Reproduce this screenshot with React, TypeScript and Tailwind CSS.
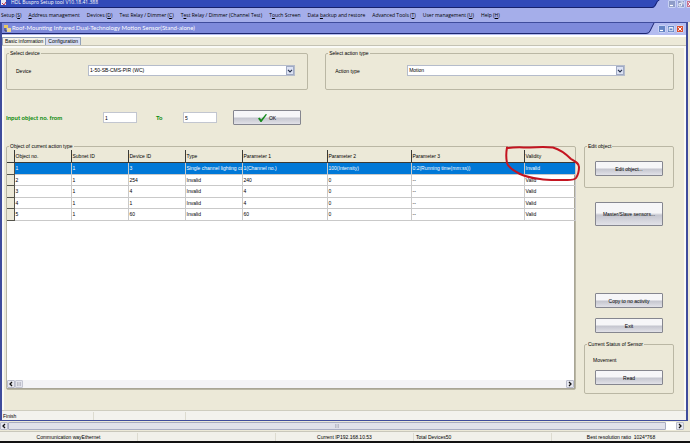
import type { ReactNode } from "react";

const MENU: ReactNode[] = [
  <>Setup (<u>S</u>)</>,
  <><u>A</u>ddress management</>,
  <>Devices (<u>D</u>)</>,
  <>Test Relay / Dimmer (<u>C</u>)</>,
  <>T<u>e</u>st Relay / Dimmer (Channel Test)</>,
  <>T<u>o</u>uch Screen</>,
  <>Data <u>b</u>ackup and restore</>,
  <>Advanced Tools (<u>T</u>)</>,
  <>User management (<u>U</u>)</>,
  <>Help (<u>H</u>)</>,
];

const COLUMNS = [
  { label: "Object no.", width: "w-[57px]" },
  { label: "Subnet ID", width: "w-[57px]" },
  { label: "Device ID", width: "w-[57px]" },
  { label: "Type", width: "w-[57px]" },
  { label: "Parameter 1", width: "w-[85px]" },
  { label: "Parameter 2", width: "w-[84px]" },
  { label: "Parameter 3", width: "w-[113px]" },
  { label: "Validity", width: "w-[51px]" },
];

const ROWS = [
  ["1", "1", "3", "Single channel lighting co", "1(Channel no.)", "100(Intensity)", "0:2(Running time(mm:ss))", "Invalid"],
  ["2", "1", "254", "Invalid", "240", "0", "--", "Valid"],
  ["3", "1", "4", "Invalid", "4", "0", "--", "Valid"],
  ["4", "1", "1", "Invalid", "4", "0", "--", "Valid"],
  ["5", "1", "60", "Invalid", "60", "0", "--", "Valid"],
];

function WindowButtons({ muted = false }: { muted?: boolean }) {
  const blue = muted ? "bg-[#8e9cc8]" : "bg-[#6484c4]";
  const red = muted ? "bg-[#c8708c]" : "bg-[#dc5030]";
  const base = "flex h-2 w-2 items-center justify-center rounded-[1px] border border-[#c8d2f4]";
  return (
    <div className="flex gap-px">
      <button aria-label="Minimize" className={`${base} ${blue}`}>
        <svg viewBox="0 0 6 6" className="h-1.5 w-1.5"><path d="M1 4.5h3" stroke="#fff" strokeWidth="1.2" /></svg>
      </button>
      <button aria-label="Restore" className={`${base} ${blue}`}>
        <svg viewBox="0 0 6 6" className="h-1.5 w-1.5" fill="none" stroke="#fff">
          {muted ? <path d="M2.5 1h2.5v2.5M1 2.5h2.5V5H1z" strokeWidth=".8" /> : <path d="M1.2 1.5h3.6v3.2H1.2zM1.2 2h3.6" strokeWidth=".8" />}
        </svg>
      </button>
      <button aria-label="Close" className={`${base} ${red}`}>
        <svg viewBox="0 0 6 6" className="h-1.5 w-1.5"><path d="M1.2 1.2l3.6 3.6M4.8 1.2L1.2 4.8" stroke="#fff" strokeWidth="1" /></svg>
      </button>
    </div>
  );
}

function Group({ title, className = "", children }: { title: string; className?: string; children: ReactNode }) {
  return (
    <fieldset className={`min-w-0 rounded-[2px] border border-[#bab7a4] ${className}`}>
      <legend className="ml-0.5 px-px leading-[7px]">{title}</legend>
      {children}
    </fieldset>
  );
}

function Combo({ id, label, value, className }: { id: string; label: string; value: string; className: string }) {
  return (
    <div className={`flex items-center pt-2 pb-[13px] pl-px ${className}`}>
      <label htmlFor={id} className="w-20 shrink-0 pl-2">{label}</label>
      <div className="relative flex-1">
        <select id={id} className="block h-[11px] w-full appearance-none border border-[#b5bccb] bg-white px-px leading-[9px]">
          <option>{value}</option>
        </select>
        <span className="pointer-events-none absolute top-px right-px flex h-[9px] w-2 items-center justify-center border border-[#a0aac4] bg-[#dde3f4]">
          <svg viewBox="0 0 6 4" className="h-1 w-1.5" fill="none" stroke="#28324c" strokeWidth="1.2"><path d="M1 .8l2 2 2-2" /></svg>
        </span>
      </div>
    </div>
  );
}

function PushButton({ className = "h-[15px]", children }: { className?: string; children: ReactNode }) {
  return (
    <button className={`flex w-[68px] items-center justify-center gap-0.5 rounded-[1px] border border-[#85868f] bg-linear-to-b from-[#f6f6f8] from-45% via-[#c5c6cf] via-55% to-[#e2e2e8] ${className}`}>
      {children}
    </button>
  );
}

function ScrollArrow({ dir }: { dir: "left" | "right" }) {
  return (
    <button aria-label={`Scroll ${dir}`} className="flex h-2 w-2 shrink-0 items-center justify-center rounded-[1px] border border-[#b9bccb] bg-[#e6e7ef]">
      <svg viewBox="0 0 4 6" className="h-1.5 w-1" fill="none" stroke="#111" strokeWidth="1.3">
        <path d={dir === "left" ? "M3 1L1 3l2 2" : "M1 1l2 2-2 2"} />
      </svg>
    </button>
  );
}

function Grip() {
  return <svg viewBox="0 0 4 4" className="h-1 w-1" stroke="#a4a6b4" strokeWidth=".6"><path d="M.5 0v4M2 0v4M3.5 0v4" /></svg>;
}

function ObjectTable() {
  return (
    <div className="relative flex flex-1 flex-col border-r border-b border-[#a9a696] bg-white">
      <table className="w-full table-fixed border-collapse">
        <thead>
          <tr className="h-3 bg-[#ece9d8]">
            <th className="w-[7px] border-r border-b border-[#3a3a36]" />
            {COLUMNS.map(c => (
              <th key={c.label} className={`${c.width} overflow-hidden border-r border-b border-[#3a3a36] p-0 pl-px text-left font-normal last:border-r-0`}>{c.label}</th>
            ))}
          </tr>
        </thead>
        <tbody>
          {ROWS.map((row, i) => (
            <tr key={row[0]} className={i === 0 ? "h-3 bg-[#0078d7] text-white" : "h-3 even:h-[11px]"}>
              <td className="border-r border-b border-[#55544c] bg-[#ece9d8] p-0" />
              {row.map((cell, j) => (
                <td key={j} className="overflow-hidden border-r border-b border-[#c9c9c9] p-0 pl-px whitespace-nowrap">{cell}</td>
              ))}
            </tr>
          ))}
        </tbody>
      </table>
      <div className="mt-auto flex items-center bg-[#f4f4f6]">
        <ScrollArrow dir="left" />
        <span className="flex h-2 w-2 items-center justify-center rounded-[1px] border border-[#c4c6d2] bg-[#e3e4ec]"><Grip /></span>
        <span className="flex-1" />
        <ScrollArrow dir="right" />
      </div>
      {/* pen mark round the validity cell */}
      <svg viewBox="0 0 80 38" className="pointer-events-none absolute -top-1 -right-2 h-[38px] w-20" fill="none" stroke="#c41420" strokeWidth="2" strokeLinecap="round">
        <path d="M6 2C14 .8 20 1.500 28 1.500C36 1 44 .8 51 1.500C58 3.500 64 8 69 13C74 16 77 17.500 77 21C77 25 76 29 74 32C72 34.500 68 34 62 34C54 34 46 34.500 38 33C30 32 24 31 18 28C12 25 6 21 5 17C4 12 4 7 5 1.500" />
      </svg>
    </div>
  );
}

export default function App() {
  return (
    <div className="flex min-h-screen flex-col bg-[#ece9d8] font-['Liberation_Sans',sans-serif] text-[5px] leading-[8px] text-black">
      <header className="font-['Open_Sans',sans-serif]">
        <div className="flex h-2 overflow-hidden bg-[#a5aeea]">
          <div className="flex flex-1 items-start gap-1 border-b border-[#16206c] bg-[#3149b8] pl-px text-white">
            <svg viewBox="0 0 6 6" className="h-1.5 w-1.5"><path d="M0 0h5v5H0z" fill="#e8e8f4" /><path d="M1 3l2 2 2-3" stroke="#c03048" fill="none" /></svg>
            <span className="leading-[5px]">HDL Buspro Setup tool V10.18.41.388</span>
          </div>
          <svg viewBox="0 0 10 8" className="h-2 w-2.5"><path d="M0 0h10C6 1 7 8 2 8H0z" fill="#3149b8" /><path d="M0 7.500h2C6 7 6 1 9 0" stroke="#16206c" fill="none" /></svg>
          <div className="w-[30px] pl-2"><WindowButtons muted /></div>
        </div>
        <nav className="flex h-3.5 items-center gap-[7px] bg-[#a5aeea] pl-px whitespace-nowrap">
          {MENU.map((item, i) => <button key={i}>{item}</button>)}
        </nav>
      </header>

      <main className="mr-0.5 flex flex-1 flex-col border-x-2 border-t border-b border-[#3f4c9c] bg-[#ece9d8]">
        <div className="flex h-[11px] bg-[#b4bcf0]">
          <div className="flex flex-1 items-center gap-px border-b border-[#1c2670] bg-[#7e8adb] pl-0.5 text-white">
            <svg viewBox="0 0 7 7" className="h-[7px] w-[7px]"><path d="M0 0h4v3H0z" fill="#e8c860" /><path d="M3 3h4v4H3z" fill="#f0d890" /><path d="M1 3v3h2" stroke="#333" fill="none" strokeWidth=".8" /></svg>
            <span className="font-['Lato',sans-serif] text-[6px]">Roof-Mounting Infrared Dual-Technology Motion Sensor(Stand-alone)</span>
          </div>
          <svg viewBox="0 0 10 11" className="h-[11px] w-2.5"><path d="M0 0h8L4 9Q3 11 0 11z" fill="#7e8adb" /><path d="M0 10.500Q3 10.500 4 8L8 0" stroke="#1c2670" fill="none" /></svg>
          <div className="flex w-[30px] items-center pl-0.5"><WindowButtons /></div>
        </div>
        <div className="h-[3px] border-t border-[#b4bcf0] bg-white" />
        <div role="tablist" className="flex h-[9px] border-b border-[#c4c2b4] leading-[7px]">
          <button role="tab" className="border border-b-0 border-[#91a0b8] bg-[#f4f2e8] px-0.5">Basic information</button>
          <button role="tab" className="border border-b-0 border-l-0 border-[#91a0b8] bg-[#d8def4] px-0.5">Configuration</button>
        </div>

        <div className="flex flex-1 flex-col border-2 border-b-0 border-[#fafaf6] pt-0.5 pr-2.5 pb-4 pl-0.5">
          <div className="flex gap-[17px]">
            <Group title="Select device" className="flex-[302]">
              <Combo id="device" label="Device" value="1-50-SB-CMS-PIR (WC)" className="pr-3" />
            </Group>
            <Group title="Select action type" className="flex-[349]">
              <Combo id="action" label="Action type" value="Motion" className="pr-12" />
            </Group>
          </div>

          <div className="flex items-center pt-5 pb-[18px]">
            <label htmlFor="from" className="w-[97px] font-['Lato',sans-serif] text-[6px] font-bold text-[#0a8a0a]">Input object no. from</label>
            <input id="from" defaultValue="1" className="h-[11px] w-[34px] border border-[#c2c6d0] bg-white px-px" />
            <label htmlFor="to" className="w-[46px] pl-[19px] font-['Lato',sans-serif] text-[6px] font-bold text-[#0a8a0a]">To</label>
            <input id="to" defaultValue="5" className="mr-4 h-[11px] w-[34px] border border-[#c2c6d0] bg-white px-px" />
            <PushButton>
              <svg viewBox="0 0 9 8" className="h-2 w-[9px]"><path d="M0 4.500L1.500 3.500 3.200 5.500 7.800 0 9 .5 3.500 8H2.500z" fill="#168a1c" /></svg>
              OK
            </PushButton>
          </div>

          <div className="flex flex-1 gap-2">
            <Group title="Object of current action type" className="mb-1 flex flex-1 flex-col">
              <ObjectTable />
            </Group>
            <aside className="flex w-[90px] flex-col items-center">
              <Group title="Edit object" className="flex w-full flex-col items-center py-[11px]">
                <PushButton>Edit object...</PushButton>
              </Group>
              <div className="mt-3.5"><PushButton className="h-6">Master/Slave sensors...</PushButton></div>
              <div className="mt-auto mb-2 flex flex-col gap-2.5">
                <PushButton>Copy to no activity</PushButton>
                <PushButton>Exit</PushButton>
              </div>
              <Group title="Current Status of Sensor" className="w-full pb-2">
                <p className="pt-2 pb-1.5 pl-2">Movement</p>
                <div className="flex justify-center"><PushButton>Read</PushButton></div>
              </Group>
            </aside>
          </div>
        </div>

        <div className="flex h-2.5 items-center border-t border-[#cfcdc0] bg-[#f3f2ee]">
          <span className="w-[92px] border-r border-[#dddbd0] pl-px">Finish</span>
          <span className="h-2 w-[92px] border-r border-[#dddbd0]" />
        </div>
      </main>

      <div className="flex h-[9px] items-center pr-1.5">
        <ScrollArrow dir="left" />
        <span className="flex h-2 flex-1 items-center justify-center rounded-[1px] border border-[#a9adc2] bg-[#e0e1ea]"><Grip /></span>
        <span className="h-2 w-2.5 bg-white" />
        <ScrollArrow dir="right" />
      </div>
      <footer className="mt-px grid h-[12px] grid-cols-5 items-center border-t border-b-2 border-t-[#c9c7bb] border-b-[#111] bg-[#f1f0ea] whitespace-nowrap">
        <span className="border-r border-[#dddbd0] text-center">Communication wayEthernet</span>
        <span className="h-2 border-r border-[#dddbd0]" />
        <span className="border-r border-[#dddbd0] text-center">Current IP192.168.10.53</span>
        <span className="border-r border-[#dddbd0] pl-0.5">Total Devices50</span>
        <span className="text-center whitespace-pre">Best resolution ratio  1024*768</span>
      </footer>
    </div>
  );
}
